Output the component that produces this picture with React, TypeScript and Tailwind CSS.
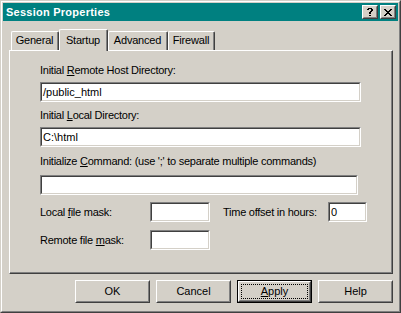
import React from "react";

function Raised({ className = "", innerClass = "", children }: { className?: string; innerClass?: string; children?: React.ReactNode }) {
  return (
    <div className={`border border-t-white border-l-white border-r-[#404040] border-b-[#404040] ${className}`}>
      <div className={`w-full h-full border border-t-[#d4d0c8] border-l-[#d4d0c8] border-r-[#808080] border-b-[#808080] ${innerClass}`}>
        {children}
      </div>
    </div>
  );
}

function Sunken({ className = "", value = "" }: { className?: string; value?: string }) {
  return (
    <div className={`h-[20px] border border-t-[#808080] border-l-[#808080] border-r-white border-b-white ${className}`}>
      <div className="w-full h-full border border-t-[#404040] border-l-[#404040] border-r-[#d4d0c8] border-b-[#d4d0c8] bg-white pl-[1px] flex items-center text-[11px] leading-[13px] text-black">
        {value}
      </div>
    </div>
  );
}

function TitleBtn({ children }: { children?: React.ReactNode }) {
  return (
    <div className="w-[16px] h-[14px] bg-[#d4d0c8] border border-t-white border-l-white border-r-[#404040] border-b-[#404040]">
      <div className="w-full h-full border border-t-[#d4d0c8] border-l-[#d4d0c8] border-r-[#808080] border-b-[#808080] flex items-center justify-center">
        {children}
      </div>
    </div>
  );
}

function CloseGlyph() {
  const rows = [
    [0, 1, 6, 7],
    [1, 2, 5, 6],
    [2, 3, 4, 5],
    [3, 4],
    [2, 3, 4, 5],
    [1, 2, 5, 6],
    [0, 1, 6, 7],
  ];
  return (
    <svg width="8" height="7" viewBox="0 0 8 7" shapeRendering="crispEdges" className="block">
      {rows.map((r, y) => r.map((x) => <rect key={`${x}-${y}`} x={x} y={y} width="1" height="1" fill="#000" />))}
    </svg>
  );
}

function HelpGlyph() {
  const px: [number, number][] = [
    [1, 0], [2, 0], [3, 0], [4, 0],
    [0, 1], [1, 1], [4, 1], [5, 1],
    [4, 2], [5, 2],
    [3, 3], [4, 3],
    [2, 4], [3, 4],
    [2, 5], [3, 5],
    [2, 7], [3, 7],
  ];
  return (
    <svg width="6" height="8" viewBox="0 0 6 8" shapeRendering="crispEdges" className="block">
      {px.map(([x, y]) => <rect key={`${x}-${y}`} x={x} y={y} width="1" height="1" fill="#000" />)}
    </svg>
  );
}

function Tab({ label, width, selected }: { label: string; width: string; selected?: boolean }) {
  return (
    <div
      className={`${width} ${selected ? "h-[22px] -mb-px relative z-10" : "h-[19px]"} bg-[#d4d0c8] border-l border-t border-r border-l-white border-t-white border-r-[#404040] rounded-t-[2px]`}
    >
      <div className="w-full h-full border-r border-r-[#808080] flex items-center justify-center text-[11px] leading-[13px] tracking-[-0.2px] pb-[1px]">
        {label}
      </div>
    </div>
  );
}

function Label({ children, className = "" }: { children: React.ReactNode; className?: string }) {
  return <div className={`text-[11px] leading-[13px] tracking-[-0.25px] whitespace-nowrap ${className}`}>{children}</div>;
}

function Button({ children, isDefault }: { children: React.ReactNode; isDefault?: boolean }) {
  if (isDefault) {
    return (
      <div className="w-[75px] h-[23px] border border-black">
        <div className="w-full h-full border border-t-white border-l-white border-r-[#404040] border-b-[#404040]">
          <div className="w-full h-full border border-t-[#d4d0c8] border-l-[#d4d0c8] border-r-[#808080] border-b-[#808080] p-px">
            <div className="w-full h-full border border-dotted border-black flex items-center justify-center text-[11px] leading-[13px]">
              {children}
            </div>
          </div>
        </div>
      </div>
    );
  }
  return (
    <Raised className="w-[75px] h-[23px]" innerClass="flex items-center justify-center text-[11px] leading-[13px]">
      {children}
    </Raised>
  );
}

export default function App() {
  return (
    <div className="w-[401px] h-[313px] bg-[#d4d0c8] text-black font-['Liberation_Sans',Arial,sans-serif]">
      <div className="w-full h-full border border-t-[#d4d0c8] border-l-[#d4d0c8] border-r-[#404040] border-b-[#404040]">
        <div className="w-full h-full border border-t-white border-l-white border-r-[#808080] border-b-[#808080] p-px flex flex-col">
          <div className="h-[18px] bg-[#008080] flex items-center pl-[3px] pr-[2px] gap-[2px]">
            <span className="flex-1 text-white font-bold text-[11px] leading-[13px] tracking-[0.25px]">Session Properties</span>
            <TitleBtn>
              <HelpGlyph />
            </TitleBtn>
            <TitleBtn>
              <CloseGlyph />
            </TitleBtn>
          </div>

          <div className="pl-[6px] pr-[5px] flex flex-col">
            <div className="mt-[8px] h-[21px] flex items-end pl-[2px]">
              <Tab label="General" width="w-[48px]" />
              <Tab label="Startup" width="w-[49px]" selected />
              <Tab label="Advanced" width="w-[60px]" />
              <Tab label="Firewall" width="w-[47px]" />
            </div>

            <div className="h-[224px] border border-t-white border-l-white border-r-[#404040] border-b-[#404040]">
              <div className="w-full h-full border-r border-b border-r-[#808080] border-b-[#808080] pl-[30px] flex flex-col">
                <Label className="mt-[13px]">
                  Initial <u>R</u>emote Host Directory:
                </Label>
                <Sunken className="mt-[5px] w-[321px]" value="/public_html" />
                <Label className="mt-[7px]">
                  Initial <u>L</u>ocal Directory:
                </Label>
                <Sunken className="mt-[5px] w-[321px]" value="C:\html" />
                <Label className="mt-[8px]">
                  Initialize <u>C</u>ommand: (use ';' to separate multiple commands)
                </Label>
                <Sunken className="mt-[7px] w-[318px]" value="" />
                <div className="mt-[7px] flex items-center">
                  <Label className="w-[110px]">
                    Local <u>f</u>ile mask:
                  </Label>
                  <Sunken className="w-[60px]" />
                  <Label className="ml-[13px] w-[105px]">Time offset in hours:</Label>
                  <Sunken className="w-[39px]" value="0" />
                </div>
                <div className="mt-[8px] flex items-center">
                  <Label className="w-[110px]">
                    Remote file <u>m</u>ask:
                  </Label>
                  <Sunken className="w-[60px]" />
                </div>
              </div>
            </div>

            <div className="mt-[6px] flex justify-end gap-[6px]">
              <Button>OK</Button>
              <Button>Cancel</Button>
              <Button isDefault>
                <span>
                  <u>A</u>pply
                </span>
              </Button>
              <Button>Help</Button>
            </div>
          </div>
        </div>
      </div>
    </div>
  );
}
